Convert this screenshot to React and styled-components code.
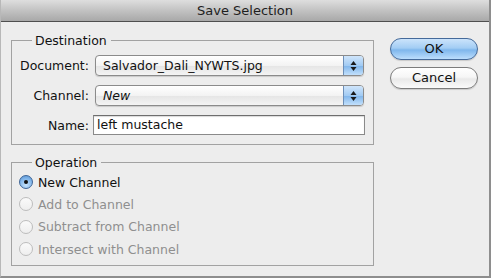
import React from "react";
import styled, { createGlobalStyle } from "styled-components";

const GlobalStyle = createGlobalStyle`
  html, body {
    margin: 0;
    padding: 0;
    background: #ededed;
  }
  body {
    font-family: "DejaVu Sans", "Liberation Sans", sans-serif;
  }
`;

function ArrowsIcon() {
  return (
    <svg width="7" height="12" viewBox="0 0 7 12">
      <path d="M3.5 1 L6.5 5 L0.5 5 Z" fill="#1a1a1a" />
      <path d="M3.5 11 L6.5 7 L0.5 7 Z" fill="#1a1a1a" />
    </svg>
  );
}

function Select(props) {
  const { value, italic } = props;
  return (
    <SelectBox>
      <SelectText italic={italic}>{value}</SelectText>
      <SelectArrows>
        <ArrowsIcon />
      </SelectArrows>
    </SelectBox>
  );
}

function Radio(props) {
  const { label, checked, disabled } = props;
  return (
    <RadioRow disabled={disabled}>
      <RadioCircle checked={checked} disabled={disabled} />
      <span>{label}</span>
    </RadioRow>
  );
}

export default function App() {
  const operations = [
    { label: "New Channel", checked: true },
    { label: "Add to Channel", disabled: true },
    { label: "Subtract from Channel", disabled: true },
    { label: "Intersect with Channel", disabled: true },
  ];
  return (
    <Window>
      <GlobalStyle />
      <TitleBar>Save Selection</TitleBar>
      <Body>
        <Main>
          <Group>
            <Legend>Destination</Legend>
            <FormGrid>
              <Label>Document:</Label>
              <Select value="Salvador_Dali_NYWTS.jpg" />
              <Label>Channel:</Label>
              <Select value="New" italic />
              <Label>Name:</Label>
              <TextInput>left mustache</TextInput>
            </FormGrid>
          </Group>
          <Group gap>
            <Legend>Operation</Legend>
            <RadioList>
              {operations.map((op, index) => (
                <Radio key={index} {...op} />
              ))}
            </RadioList>
          </Group>
        </Main>
        <Buttons>
          <Button primary>OK</Button>
          <Button>Cancel</Button>
        </Buttons>
      </Body>
    </Window>
  );
}

const Window = styled.div`
  width: 491px;
  height: 278px;
  box-sizing: border-box;
  background: #ededed;
  border-right: 2px solid #8e8e8e;
  border-bottom: 2px solid #8e8e8e;
  border-left: 1px solid #b8b8b8;
  display: flex;
  flex-direction: column;
  overflow: hidden;
`;

const TitleBar = styled.div`
  height: 22px;
  box-sizing: border-box;
  background: linear-gradient(#dedede, #c2c2c2 50%, #a8a8a8);
  border-bottom: 1px solid #4f4f4f;
  text-align: center;
  font-size: 13px;
  line-height: 21px;
  color: #1e1e1e;
`;

const Body = styled.div`
  display: flex;
  padding: 11px 11px 0 10px;
  gap: 16px;
`;

const Main = styled.div`
  width: 363px;
  display: flex;
  flex-direction: column;
`;

const Group = styled.fieldset`
  margin: ${(props) => (props.gap ? "10px" : "0")} 0 0 0;
  padding: ${(props) => (props.gap ? "1px 8px 5px 8px" : "7px 8px 9px 8px")};
  border: 1px solid #a2a2a2;
  min-width: 0;
`;

const Legend = styled.legend`
  margin-left: 12px;
  padding: 0 4px 0 3px;
  font-size: 12.5px;
  line-height: 15px;
  color: #111;
`;

const FormGrid = styled.div`
  display: grid;
  grid-template-columns: 69px 1fr;
  column-gap: 6px;
  row-gap: 9px;
  align-items: center;
`;

const Label = styled.div`
  text-align: right;
  font-size: 12.5px;
  color: #111;
`;

const SelectBox = styled.div`
  height: 21px;
  box-sizing: border-box;
  margin-right: 1px;
  display: flex;
  border: 1px solid #8b8b8b;
  border-radius: 4px;
  background: linear-gradient(#ffffff, #f3f3f3 50%, #e6e6e6 55%, #f4f4f4);
  box-shadow: 0 1px 1px rgba(0, 0, 0, 0.15);
  overflow: hidden;
`;

const SelectText = styled.div`
  flex: 1;
  padding-left: 7px;
  font-size: 12.5px;
  line-height: 19px;
  color: #111;
  font-style: ${(props) => (props.italic ? "italic" : "normal")};
`;

const SelectArrows = styled.div`
  width: 19px;
  display: flex;
  align-items: center;
  justify-content: center;
  border-left: 1px solid #6d8fb8;
  background: linear-gradient(#cfe5fb, #a2cbf3 50%, #84b8ec 55%, #c2e0fc);
`;

const TextInput = styled.div`
  height: 20px;
  box-sizing: border-box;
  margin-left: -2px;
  border: 1px solid #8a8a8a;
  border-top-color: #6e6e6e;
  background: #fff;
  box-shadow: inset 0 1px 1px rgba(0, 0, 0, 0.15);
  padding-left: 3px;
  font-size: 12.5px;
  line-height: 18px;
  color: #111;
`;

const RadioList = styled.div`
  display: flex;
  flex-direction: column;
  margin-left: -1px;
`;

const RadioRow = styled.div`
  height: 22.3px;
  display: flex;
  align-items: center;
  gap: 5px;
  font-size: 12.5px;
  color: ${(props) => (props.disabled ? "#8f8f8f" : "#111")};
`;

const RadioCircle = styled.span`
  width: 14px;
  height: 14px;
  box-sizing: border-box;
  border-radius: 50%;
  position: relative;
  border: 1px solid
    ${(props) =>
      props.checked ? "#3f6596" : props.disabled ? "#bdbdbd" : "#8a8a8a"};
  background: ${(props) =>
    props.checked
      ? "radial-gradient(circle at 50% 75%, #c8e3fb, #7fb4e9 60%, #5690cf)"
      : "linear-gradient(#fafafa, #eeeeee)"};
  &::after {
    content: "";
    display: ${(props) => (props.checked ? "block" : "none")};
    position: absolute;
    width: 4px;
    height: 4px;
    border-radius: 50%;
    background: #111;
    top: 4px;
    left: 4px;
  }
`;

const Buttons = styled.div`
  width: 88px;
  display: flex;
  flex-direction: column;
  gap: 7px;
  padding-top: 5px;
`;

const Button = styled.div`
  height: 22px;
  box-sizing: border-box;
  border-radius: 11px;
  text-align: center;
  font-size: 13px;
  line-height: 20px;
  color: #111;
  border: 1px solid ${(props) => (props.primary ? "#456a9a" : "#7c7c7c")};
  background: ${(props) =>
    props.primary
      ? "linear-gradient(#cbe3fb, #a3cdf4 45%, #7fb6ec 55%, #bcdefd)"
      : "linear-gradient(#ffffff, #f6f6f6 45%, #e9e9e9 55%, #fafafa)"};
  box-shadow: 0 1px 1px rgba(0, 0, 0, 0.15);
`;
